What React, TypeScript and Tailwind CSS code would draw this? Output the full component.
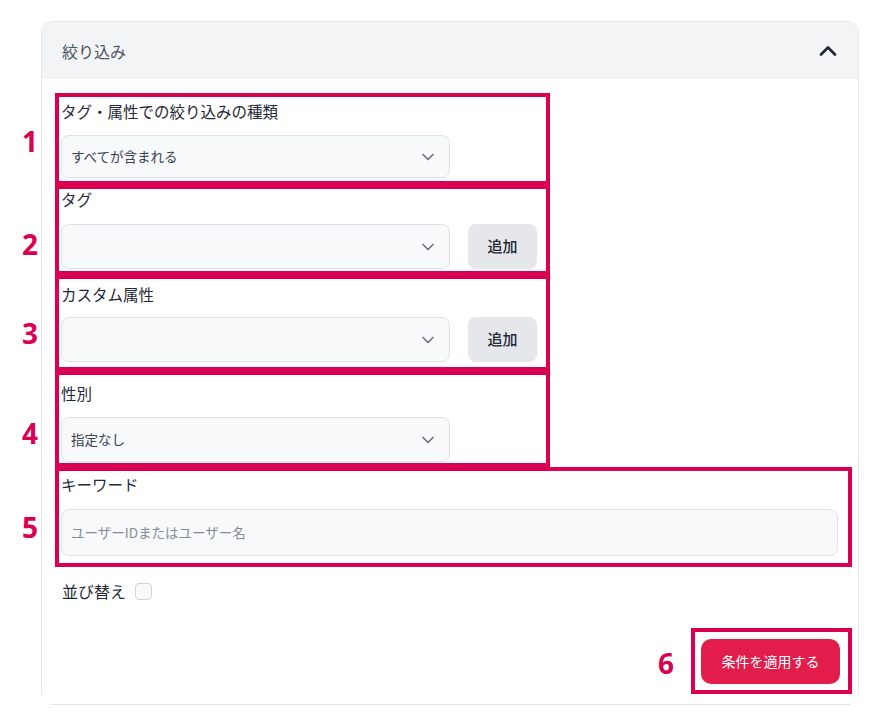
import { ChevronDown, ChevronUp } from "lucide-react";

function Select({ value }: { value?: string }) {
  return (
    <div className="flex h-full w-[389px] items-center justify-between rounded-lg border border-[#dfe1e6] bg-[#f8f9fb] pl-[9px] pr-[11px] text-[13.5px] text-[#374151]">
      <span>{value}</span>
      <ChevronDown size={20} strokeWidth={2} className="text-[#6b7280]" />
    </div>
  );
}

function AddButton() {
  return (
    <button className="ml-[18px] flex h-full w-[69px] items-center justify-center rounded-lg bg-[#e5e7eb] text-[15px] font-medium text-[#1f2937]">
      追加
    </button>
  );
}

function Num({ n, className }: { n: string; className: string }) {
  return (
    <span
      className={
        "absolute w-[20px] text-center font-['Noto_Sans',sans-serif] text-[28px] font-bold leading-none text-[#d90052] " +
        className
      }
    >
      {n}
    </span>
  );
}

export default function App() {
  return (
    <div className="min-h-[711px] bg-white pt-[21px] font-['Noto_Sans_CJK_JP',sans-serif] text-[#1f2937]">
      <div className="ml-[41px] w-[818px] rounded-t-xl border-x border-t border-[#e5e7eb]">
        <div className="flex h-[57px] items-center justify-between rounded-t-xl bg-[#f3f4f6] pl-[20px] pr-[16px]">
          <span className="text-[16px] text-[#4b5563]">絞り込み</span>
          <ChevronUp size={28} strokeWidth={2.3} className="text-[#1f2937]" />
        </div>

        <div className="flex flex-col pl-[13px] pr-[6px] pt-[14px] pb-px">
          {/* 1 */}
          <div className="relative flex h-[92px] w-[495px] flex-col border-4 border-[#d90052] pl-[2px]">
            <Num n="1" className="left-[-39px] top-[30px]" />
            <div className="mt-[4px] h-[20px] text-[15.5px] leading-[20px]">タグ・属性での絞り込みの種類</div>
            <div className="mt-[14px] h-[43px]">
              <Select value="すべてが含まれる" />
            </div>
          </div>

          {/* 2 */}
          <div className="relative flex h-[90px] w-[495px] flex-col border-4 border-[#d90052] pl-[2px]">
            <Num n="2" className="left-[-39px] top-[41px]" />
            <div className="h-[20px] text-[15.5px] leading-[20px]">タグ</div>
            <div className="mt-[15px] flex h-[45px]">
              <Select />
              <AddButton />
            </div>
          </div>

          {/* 3 */}
          <div className="relative flex h-[96px] w-[495px] flex-col border-4 border-[#d90052] pl-[2px]">
            <Num n="3" className="left-[-39px] top-[40px]" />
            <div className="mt-[5px] h-[20px] text-[15.5px] leading-[20px]">カスタム属性</div>
            <div className="mt-[13px] flex h-[45px]">
              <Select />
              <AddButton />
            </div>
          </div>

          {/* 4 */}
          <div className="relative flex h-[96px] w-[495px] flex-col border-4 border-[#d90052] pl-[2px]">
            <Num n="4" className="left-[-39px] top-[44px]" />
            <div className="mt-[8px] h-[20px] text-[15.5px] leading-[20px]">性別</div>
            <div className="mt-[14px] h-[45px]">
              <Select value="指定なし" />
            </div>
          </div>

          {/* 5 */}
          <div className="relative flex h-[100px] w-[797px] flex-col border-4 border-[#d90052] pl-[2px]">
            <Num n="5" className="left-[-39px] top-[42px]" />
            <div className="mt-[3px] h-[20px] text-[15.5px] leading-[20px]">キーワード</div>
            <div className="mt-[15px] flex h-[47px] w-[777px] items-center rounded-lg border border-[#dfe1e6] bg-[#f8f9fb] pl-[9px] text-[13.5px] text-[#858b96]">
              ユーザーIDまたはユーザー名
            </div>
          </div>

          <div className="mt-[14px] flex h-[20px] items-center gap-[9px] pl-[7px]">
            <span className="text-[16px] leading-[20px]">並び替え</span>
            <span className="h-[17px] w-[17px] rounded-[4px] border border-[#d1d5db] bg-[#f8f9fb]" />
          </div>

          {/* 6 */}
          <div className="relative mt-[27px] flex h-[66px] w-[161px] self-end items-center border-4 border-[#d90052] pl-[6px]">
            <Num n="6" className="left-[-39px] top-[17px]" />
            <button className="flex h-[45px] w-[139px] items-center justify-center rounded-[10px] bg-[#e31d4b] text-[14px] text-white">
              条件を適用する
            </button>
          </div>
        </div>
      </div>
      <div className="ml-[50px] mt-[9px] h-px w-[800px] bg-[#e5e7eb]" />
    </div>
  );
}
